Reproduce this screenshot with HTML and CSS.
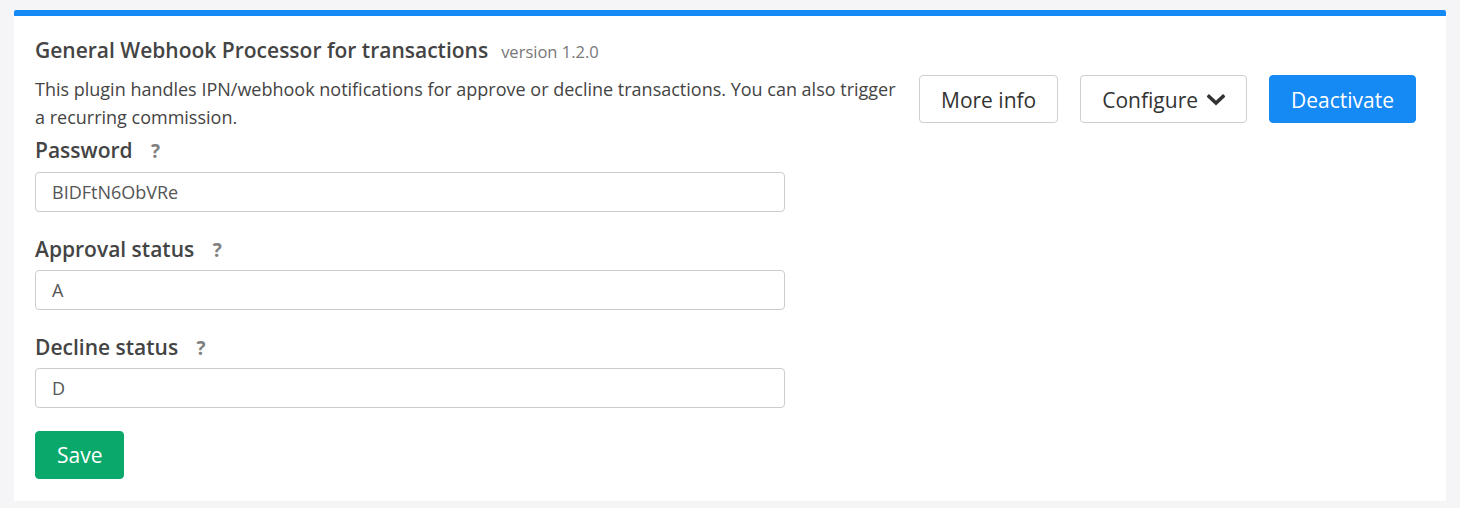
FILE: index.html
```html
<!DOCTYPE html>
<html>
<head>
<meta charset="utf-8">
<link rel="stylesheet" href="styles.css">
</head>
<body>
<div class="card">
  <div class="title-row">
    <span class="title">General Webhook Processor for transactions</span>
    <span class="version">version 1.2.0</span>
  </div>
  <div class="head-row">
    <p class="desc">This plugin handles IPN/webhook notifications for approve or decline transactions. You can also trigger a recurring commission.</p>
    <div class="actions">
      <button class="btn btn-default">More info</button>
      <button class="btn btn-default">Configure <svg class="chev" width="18" height="12" viewBox="0 0 18 12"><polyline points="2,2.5 9,9 16,2.5" fill="none" stroke="#333" stroke-width="3.6" stroke-linecap="square"/></svg></button>
      <button class="btn btn-primary">Deactivate</button>
    </div>
  </div>
  <form class="form">
    <div class="field">
      <label class="label">Password <span class="help">?</span></label>
      <input class="input" type="text" value="BIDFtN6ObVRe">
    </div>
    <div class="field">
      <label class="label">Approval status <span class="help">?</span></label>
      <input class="input" type="text" value="A">
    </div>
    <div class="field">
      <label class="label">Decline status <span class="help">?</span></label>
      <input class="input" type="text" value="D">
    </div>
    <button type="button" class="btn btn-save">Save</button>
  </form>
</div>
</body>
</html>
```

FILE: styles.css
```css
html, body {
  margin: 0;
  padding: 0;
  background: #f5f5f7;
}
body {
  padding: 10px 14px 7px 14px;
  font-family: "Open Sans", "Noto Sans", sans-serif;
  color: #444;
}
.card {
  background: #fff;
  border-top: 6px solid #1589f4;
  border-radius: 2px 2px 0 0;
  padding: 21px 30px 22px 21px;
}
.title-row {
  display: flex;
  align-items: baseline;
  height: 26px;
  line-height: 26px;
}
.title {
  font-size: 21px;
  font-weight: 600;
  color: #444;
}
.version {
  font-size: 16.5px;
  color: #777;
  margin-left: 13px;
}
.head-row {
  display: flex;
  align-items: flex-start;
  margin-top: 12px;
}
.desc {
  flex: 1;
  margin: 0;
  font-size: 18px;
  line-height: 28px;
  color: #444;
}
.actions {
  display: flex;
  gap: 22px;
  margin-left: 22px;
}
.btn {
  font-family: "Open Sans", "Noto Sans", sans-serif;
  font-size: 21px;
  height: 48px;
  padding: 0 21px;
  border-radius: 4px;
  border: 1px solid #cfcfcf;
  background: #fff;
  color: #333;
  display: inline-flex;
  align-items: center;
  cursor: pointer;
}
.btn-default {
  padding-top: 2px;
}
.chev {
  margin-left: 9px;
  margin-top: 0;
}
.btn-primary {
  background: #1589f4;
  border-color: #1589f4;
  color: #fff;
  padding-top: 2px;
}
.form {
  margin: 5px 0 0 0;
  width: 750px;
}
.field {
  margin-bottom: 23px;
}
.label {
  display: block;
  font-size: 21px;
  font-weight: 600;
  line-height: 28px;
  height: 28px;
  color: #444;
  margin-bottom: 8px;
}
.field + .field .label {
  margin-bottom: 7px;
}
.help {
  font-size: 19px;
  font-weight: 700;
  color: #808080;
  margin-left: 13px;
  line-height: 1;
}
.input {
  display: block;
  box-sizing: border-box;
  width: 750px;
  height: 40px;
  border: 1px solid #ccc;
  border-radius: 4px;
  padding: 0 16px;
  font-family: "Open Sans", "Noto Sans", sans-serif;
  font-size: 18px;
  color: #555;
  background: #fff;
}
.btn-save {
  background: #0aa86b;
  border-color: #0aa86b;
  color: #fff;
  padding: 0 21px;
}
```
